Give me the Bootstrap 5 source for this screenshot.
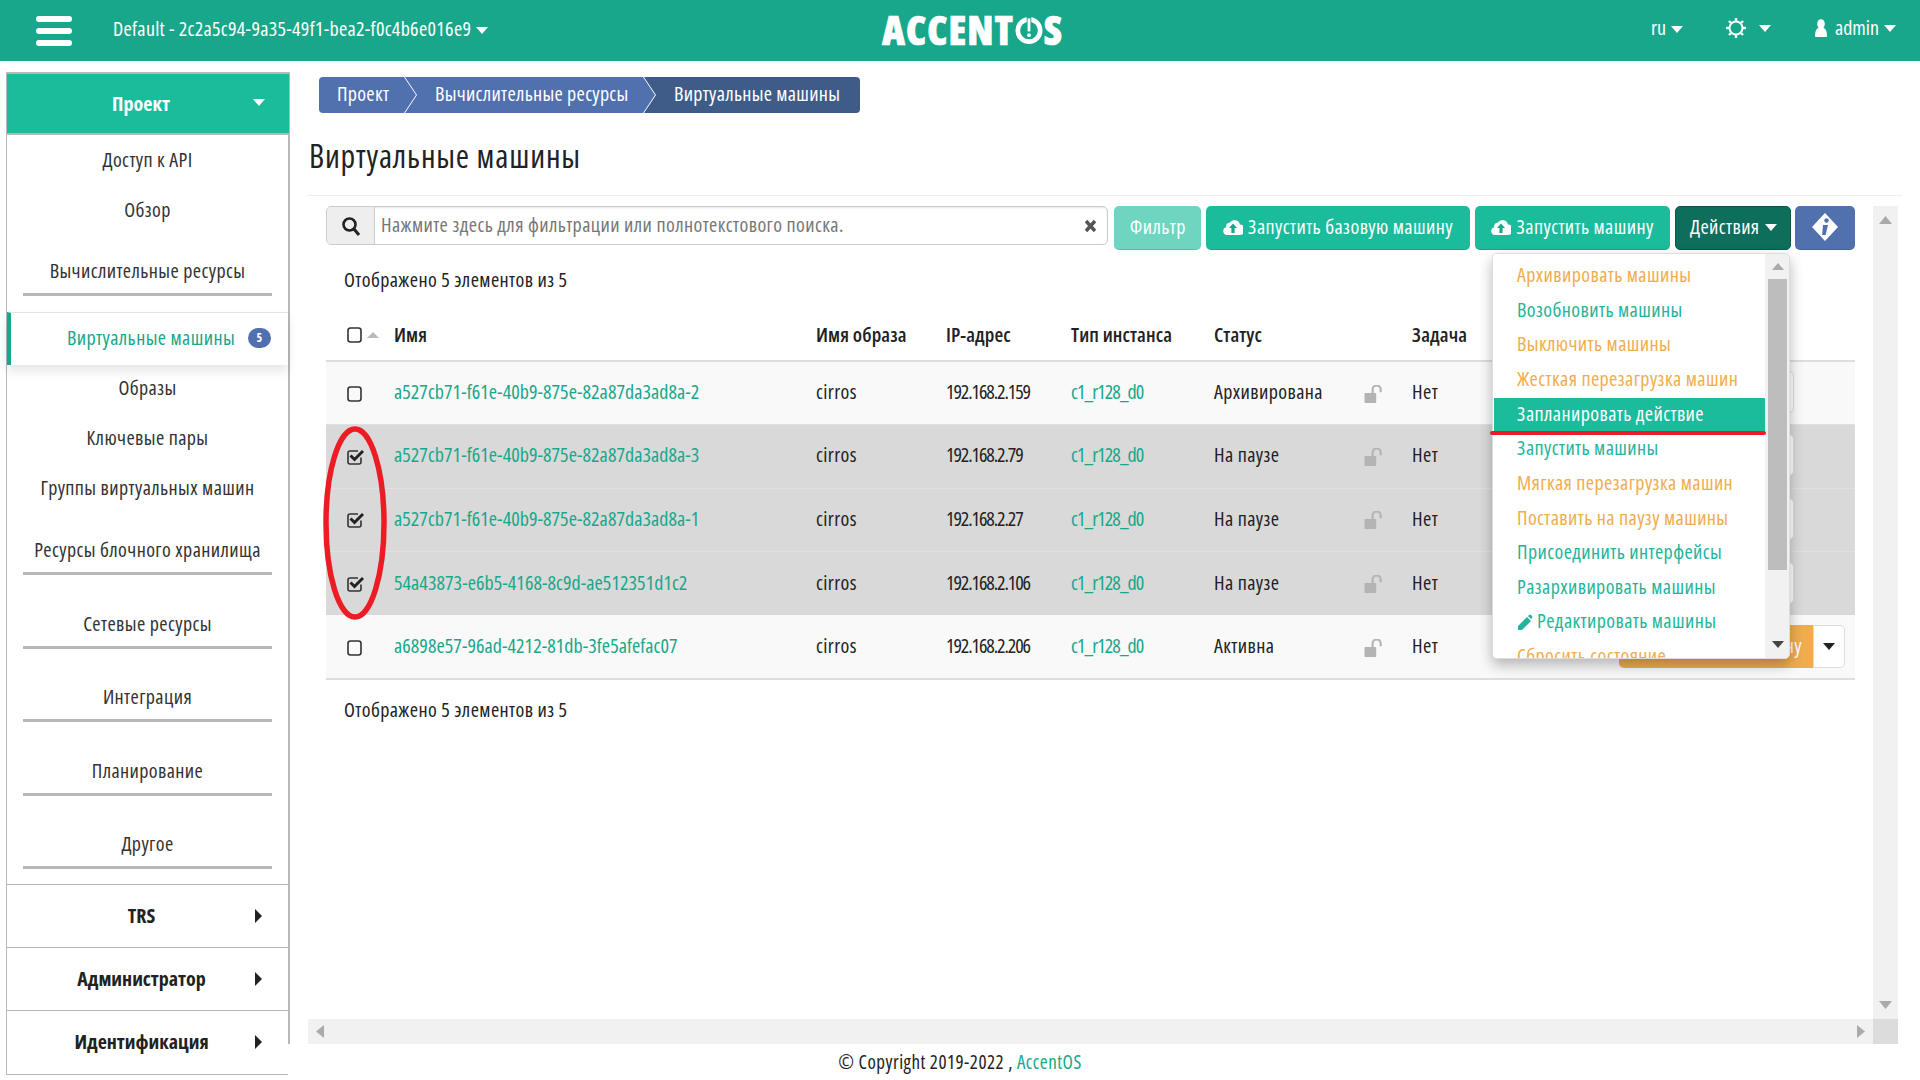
<!DOCTYPE html>
<html lang="ru">
<head>
<meta charset="utf-8">
<title>Виртуальные машины</title>
<link href="https://cdn.jsdelivr.net/npm/bootstrap@5.3.0/dist/css/bootstrap.min.css" rel="stylesheet">
<style>
:root{--ac-green:#18a78a;--ac-teal:#1abc9c;--ac-blue:#5070ae;--ac-line:#b8b8b8;}
html,body{height:100%;}
body{font-family:"Open Sans","Liberation Sans",sans-serif;font-stretch:condensed;font-size:20px;letter-spacing:.4px;color:#222;background:#fff;overflow:hidden;width:1920px;height:1080px;display:flex;flex-direction:column;white-space:nowrap;}
a{color:var(--ac-green);text-decoration:none;}
.ip-t{letter-spacing:-1.1px;}
.ty-t{letter-spacing:-.95px;}
.id-t{letter-spacing:.05px;}
.top-bar{height:61px;background:var(--ac-green);color:#fff;flex:none;padding:0;}
.burger{width:36px;margin-left:36px;display:flex;flex-direction:column;gap:6px;}
.burger span{display:block;height:6px;background:#fff;border-radius:3px;}
.proj{margin-left:41px;font-size:20px;width:380px;letter-spacing:.3px;margin-top:-4px;}
.tri-d{display:inline-block;width:0;height:0;border-left:6px solid transparent;border-right:6px solid transparent;border-top:7px solid currentColor;vertical-align:2px;margin-left:5px;}
.tri-r{display:inline-block;width:0;height:0;border-top:7px solid transparent;border-bottom:7px solid transparent;border-left:7px solid #222;}
.logo-wrap{position:absolute;left:882px;top:13px;height:34px;display:flex;align-items:center;font-weight:800;font-size:40px;line-height:1;letter-spacing:1px;color:#fff;-webkit-text-stroke:.7px #fff;}
.logo-wrap svg{width:28px;height:29px;margin:0 1px;}
.tr-lang{position:absolute;left:1651px;top:13px;letter-spacing:0;}
.tr-gear{position:absolute;left:1726px;top:18px;display:flex;align-items:center}
.gear-gap{margin-left:13px;}
.tr-user{position:absolute;left:1815px;top:13px;display:flex;align-items:center;letter-spacing:0;}
.layout{flex:1 1 auto;display:flex;min-height:0;}
.side{width:284px;margin:11px 0 0 6px;flex:none;border-left:1px solid var(--ac-line);border-right:2px solid var(--ac-line);height:1003px;border-bottom:1px solid var(--ac-line);}
.side-head{height:63px;background:var(--ac-teal);color:#fff;font-weight:700;font-size:20px;letter-spacing:0;border-top:2px solid var(--ac-line);border-bottom:2px solid var(--ac-line);margin-right:-1px;position:relative;display:flex;align-items:center;justify-content:center;padding-right:14px;}
.side-head .tri-d{position:absolute;right:24px;top:25px;}
.side-i{display:flex;align-items:center;justify-content:center;color:#333;font-size:20px;}
.hi-50{height:50px;}
.hi-49{height:49px;}
.up-2{padding-bottom:3px;}
.side-g{display:flex;align-items:flex-end;justify-content:center;margin:0 16px;border-bottom:3px solid var(--ac-line);padding-bottom:10px;color:#333;font-size:20px;line-height:25px;}
.g-60{height:61px;}
.g-73{height:73.6px;}
.side-act{height:53px;margin-top:16px;color:var(--ac-green);border-top:1px solid #e4e4e4;border-left:4px solid var(--ac-green);box-shadow:0 6px 10px rgba(0,0,0,.1);display:flex;align-items:center;padding:0 0 2px 56px;gap:13px;font-size:20px;background:#fff;position:relative;}
.side-act .badge{background:var(--ac-blue);border-radius:12px;width:23px;height:20px;padding:0;font-size:12px;line-height:20px;}
.side-foot{height:63px;border-top:1px solid var(--ac-line);display:flex;align-items:center;justify-content:center;position:relative;font-weight:700;font-size:20px;letter-spacing:0;color:#222;padding-right:12px;}
.side-foot .tri-r{position:absolute;right:26px;top:24px;}
.mt-16px{margin-top:15px;}
.work{flex:1 1 auto;min-width:0;display:flex;flex-direction:column;position:relative;}
.crumbs{margin:16px 0 0 29px;display:flex;height:36px;width:541px;border-radius:4px;overflow:hidden;list-style:none;padding:0;flex:none;}
.crumbs li{background:var(--ac-blue);color:#fff;display:flex;align-items:center;font-size:20px;letter-spacing:.3px;padding-bottom:2px;}
.crumbs li.c1{width:97px;padding-left:18px;clip-path:polygon(0 0,calc(100% - 12px) 0,100% 50%,calc(100% - 12px) 100%,0 100%);}
.crumbs li.c2{width:250px;margin-left:-11px;padding-left:30px;clip-path:polygon(0 0,calc(100% - 12px) 0,100% 50%,calc(100% - 12px) 100%,0 100%,12px 50%);}
.crumbs li.c3{flex:1;margin-left:-11px;padding-left:30px;background:#3f5b88;clip-path:polygon(0 0,100% 0,100% 100%,0 100%,12px 50%);}
.page-t{margin:25px 0 0 19px;font-size:32px;line-height:36px;font-weight:400;color:#222;letter-spacing:.8px;}
.rule{margin:21px 18px 0 18px;border-top:1px solid #eee;height:0;flex:none;}
.pane{display:flex;margin:10px 22px 0 18px;height:813px;flex:none;}
.pane-in{flex:1 1 auto;min-width:0;padding-left:18px;padding-right:18px;position:relative;}
.vbar{width:25px;background:#f1f1f1;flex:none;display:flex;flex-direction:column;justify-content:space-between;align-items:center;padding:10px 0 10px;}
.hbar{margin:0 22px 0 18px;height:25px;background:#f1f1f1;display:flex;justify-content:space-between;align-items:center;flex:none;padding:0 33px 0 8px;position:relative;}
.hbar i{position:absolute;right:0;top:0;width:25px;height:25px;background:#dcdcdc;}
.tools{display:flex;gap:5px;height:44px;}
.srch{width:784px;height:39px;display:flex;border:1px solid #ccc;border-radius:5px;overflow:hidden;box-shadow:inset 0 1px 2px rgba(0,0,0,.1);margin-right:1px;}
.srch-ic{width:48px;background:#eee;border-right:1px solid #ccc;display:flex;align-items:center;justify-content:center;}
.srch-tx{flex:1;color:#777;padding:0 0 2px 6px;display:flex;align-items:center;font-size:20px;}
.srch-x{width:34px;display:flex;align-items:center;justify-content:center;}
.btn-ac{height:44px;border-radius:5px;color:#fff;border:0;border-bottom:1px solid rgba(0,0,0,.12);font-size:20px;letter-spacing:.4px;display:flex;align-items:center;justify-content:center;gap:5px;padding:0 0 2px;font-stretch:condensed;}
.b-flt{width:87px;background:#6dd5c0;}
.b-run1{width:264px;background:var(--ac-teal);}
.b-run2{width:196px;background:var(--ac-teal);}
.b-act{width:116px;background:#0e6e5c;border:1px solid #0a5648;}
.b-inf{width:60px;background:var(--ac-blue);margin-left:-1px;}
.cnt{margin:17px 0 0 18px;line-height:26px;}
.cnt-b{margin:17px 0 0 18px;line-height:26px;}
.vm-t{table-layout:fixed;width:1529px;margin:0;margin-top:16px;--bs-table-bg:transparent;}
.vm-t th{font-weight:600;letter-spacing:.1px;border-bottom:2px solid #ddd;height:52px;padding:0 0 0 13px;vertical-align:middle;font-size:20px;color:#222;}
.vm-t td{height:63.5px;padding:0 0 2px 13px;vertical-align:middle;font-size:20px;border-bottom:0;background:#f9f9f9;color:#222;box-shadow:none;}
.vm-t tr.pick td{background:#d9d9d9;border-top:1px solid #e0e0e0;}
.vm-t tr:last-child td{border-bottom:2px solid #ddd;padding-bottom:0;}
.c-a{width:55px}.c-b{width:422px}.c-c{width:130px}.c-d{width:125px}.c-e{width:143px}.c-f{width:150px}.c-g{width:48px}.c-h{width:120px}
.vm-t th.cb,.vm-t td.cb{padding:0 0 2px 20px;}
.sort-up{display:inline-block;border-left:6px solid transparent;border-right:6px solid transparent;border-bottom:6px solid #bbb;vertical-align:3px;margin-left:3px;}
.row-btn{display:block;margin-left:auto;margin-right:61px;height:42px;width:180px;background:#fff;border:1px solid #ddd;border-radius:5px;}
.row-grp{display:flex;height:43px;width:226px;margin-left:auto;margin-right:10px;}
.row-grp b{flex:1;background:#f0ad4e;border-radius:5px 0 0 5px;color:#fff;font-weight:400;text-align:right;padding-right:11px;line-height:41px;font-size:20px;}
.row-grp span{width:32px;background:#fff;border:1px solid #ddd;border-radius:0 5px 5px 0;display:flex;align-items:center;justify-content:center;color:#222;}
.row-grp .tri-d{margin:0;}
.menu-pop{position:absolute;left:1184px;top:47px;width:298px;height:406px;margin:0;padding:0;background:#fff;border:1px solid #ddd;border-radius:5px;box-shadow:0 6px 14px rgba(0,0,0,.28);overflow:hidden;display:flex;z-index:5;}
.menu-list{width:272px;list-style:none;margin:0;padding:4px 0 0;background:#fff;flex:none;}
.menu-list li{height:34.6px;line-height:34px;padding-left:24px;font-size:20px;white-space:nowrap;}
.m-o{color:#f0ad4e}.m-t{color:#25b49a}
.menu-list li.m-on{background:var(--ac-teal);color:#fff;margin-left:1px;padding-left:23px;height:33px;margin-top:2px;line-height:32px;}
.menu-sb{flex:1;background:#f1f1f1;position:relative;}
.menu-sb i{position:absolute;left:3px;right:2px;top:25px;height:291px;background:#bdbdbd;}
.menu-sb svg{position:absolute;left:7px;}
.a-up{top:9px}.a-dn{bottom:9px}
.red-u{position:absolute;left:1182px;top:225px;width:276px;height:4px;background:#ed1c24;border-radius:2px;z-index:6;}
.red-o{position:absolute;left:15px;top:220px;width:64px;height:194px;z-index:6;}
.foot-l{margin-left:-2px;height:36px;background:#fff;position:relative;text-align:center;padding-right:288px;line-height:36px;font-size:19px;letter-spacing:.5px;flex:none;}
</style>
</head>
<body>
<svg width="0" height="0" class="d-none">
<defs>
<symbol id="ic-cloud" viewBox="0 0 20 18"><path fill="#fff" d="M4 17a4 4 0 0 1-1-7.800 4.500 4.500 0 0 1 4-4.600A5.500 5.500 0 0 1 17 6.500a5 5 0 0 1-.5 10.500z"/><path fill="#18a78a" d="M10 5.500l4 4.500h-2.400v5H8.400v-5H6z"/></symbol>
<symbol id="ic-lock" viewBox="0 0 20 20"><rect x="0" y="9" width="13" height="11" rx="1" fill="#b4b4b4"/><path d="M9 9V5a4.500 4.500 0 0 1 9 0v3" fill="none" stroke="#b4b4b4" stroke-width="2.400"/></symbol>
<symbol id="ic-box" viewBox="0 0 18 18"><rect x="2" y="2" width="13" height="14" rx="2.500" fill="none" stroke="#333" stroke-width="1.600"/></symbol>
<symbol id="ic-chk" viewBox="0 0 18 18"><path d="M15 9.500V14a2 2 0 0 1-2 2H4a2 2 0 0 1-2-2V5a2 2 0 0 1 2-2h8" fill="none" stroke="#333" stroke-width="1.600"/><path d="M4.500 7.500l4 4L17 3" fill="none" stroke="#222" stroke-width="3"/></symbol>
</defs>
</svg>

<header class="navbar top-bar position-relative flex-nowrap justify-content-start">
  <div class="burger"><span></span><span></span><span></span></div>
  <div class="proj text-nowrap"><span>Default - 2c2a5c94-9a35-49f1-bea2-f0c4b6e016e9</span><span class="tri-d"></span></div>
  <div class="logo-wrap">ACCENT<svg viewBox="0 0 30 30"><circle cx="15" cy="15" r="12" fill="none" stroke="#fff" stroke-width="5"/><rect x="12.500" y="0" width="5" height="15" fill="#18a78a"/><rect x="13.500" y="2" width="3" height="14" fill="#fff"/><circle cx="15" cy="20" r="2" fill="#fff"/></svg>S</div>
  <div class="tr-lang">ru<span class="tri-d"></span></div>
  <div class="tr-gear"><svg width="20" height="20" viewBox="0 0 20 20"><circle cx="10" cy="10" r="6.500" fill="none" stroke="#fff" stroke-width="2"/><path stroke="#fff" stroke-width="2.400" d="M10 0v3M10 17v3M0 10h3M17 10h3M3 3l2 2M15 15l2 2M17 3l-2 2M5 15l-2 2"/></svg><span class="tri-d gear-gap"></span></div>
  <div class="tr-user"><svg width="12" height="18" viewBox="0 0 12 18" class="me-2"><ellipse cx="6" cy="5" rx="3.800" ry="4.800" fill="#fff"/><path fill="#fff" d="M0 17c0-5 1.500-7.500 3.500-8h5c2 .5 3.500 3 3.500 8 0 .6-.5 1-1 1H1c-.5 0-1-.4-1-1z"/></svg>admin<span class="tri-d"></span></div>
</header>

<div class="layout">
  <aside class="side">
    <div class="side-head">Проект<span class="tri-d"></span></div>
    <div class="side-i hi-50">Доступ к API</div>
    <div class="side-i hi-50">Обзор</div>
    <div class="side-g g-60">Вычислительные ресурсы</div>
    <div class="side-act"><span>Виртуальные машины</span><span class="badge rounded-pill">5</span></div>
    <div class="side-i hi-49 up-2">Образы</div>
    <div class="side-i hi-50 up-2">Ключевые пары</div>
    <div class="side-i hi-50 up-2">Группы виртуальных машин</div>
    <div class="side-g g-60">Ресурсы блочного хранилища</div>
    <div class="side-g g-73">Сетевые ресурсы</div>
    <div class="side-g g-73">Интеграция</div>
    <div class="side-g g-73">Планирование</div>
    <div class="side-g g-73">Другое</div>
    <div class="side-foot mt-16px">TRS<span class="tri-r"></span></div>
    <div class="side-foot">Администратор<span class="tri-r"></span></div>
    <div class="side-foot">Идентификация<span class="tri-r"></span></div>
  </aside>

  <main class="work">
    <ol class="crumbs">
      <li class="c1">Проект</li>
      <li class="c2">Вычислительные ресурсы</li>
      <li class="c3">Виртуальные машины</li>
    </ol>
    <h1 class="page-t">Виртуальные машины</h1>
    <div class="rule"></div>
    <div class="pane">
      <div class="pane-in">
        <div class="tools">
          <div class="srch">
            <span class="srch-ic"><svg width="20" height="20" viewBox="0 0 20 20"><circle cx="8.500" cy="8.500" r="6" fill="none" stroke="#222" stroke-width="2.600"/><path d="M13 13l5 6" stroke="#222" stroke-width="3"/></svg></span>
            <span class="srch-tx">Нажмите здесь для фильтрации или полнотекстового поиска.</span>
            <span class="srch-x"><svg width="13" height="14" viewBox="0 0 13 14"><path d="M2 2l9 10M11 2L2 12" stroke="#555" stroke-width="3.400"/></svg></span>
          </div>
          <button class="btn btn-ac b-flt">Фильтр</button>
          <button class="btn btn-ac b-run1"><svg width="20" height="18"><use href="#ic-cloud"/></svg>Запустить базовую машину</button>
          <button class="btn btn-ac b-run2"><svg width="20" height="18"><use href="#ic-cloud"/></svg>Запустить машину</button>
          <button class="btn btn-ac b-act">Действия<span class="tri-d ms-0"></span></button>
          <button class="btn btn-ac b-inf"><svg width="28" height="30" viewBox="0 0 28 30"><path d="M14 1l13 14-13 14L1 15z" fill="#fff"/><circle cx="15.500" cy="8.500" r="2.200" fill="#5070ae"/><path d="M12 13h5l-2.400 10h-3.400z" fill="#5070ae"/></svg></button>
        </div>
        <div class="cnt">Отображено 5 элементов из 5</div>
        <table class="table vm-t">
          <colgroup><col class="c-a"><col class="c-b"><col class="c-c"><col class="c-d"><col class="c-e"><col class="c-f"><col class="c-g"><col class="c-h"><col></colgroup>
          <thead><tr>
            <th class="cb text-nowrap"><svg width="18" height="18" class="align-middle"><use href="#ic-box"/></svg><span class="sort-up"></span></th>
            <th>Имя</th><th>Имя образа</th><th>IP-адрес</th><th>Тип инстанса</th><th>Статус</th><th></th><th>Задача</th><th></th>
          </tr></thead>
          <tbody>
            <tr><td class="cb"><svg width="18" height="18"><use href="#ic-box"/></svg></td><td class="id-t"><a href="#">a527cb71-f61e-40b9-875e-82a87da3ad8a-2</a></td><td>cirros</td><td class="ip-t">192.168.2.159</td><td class="ty-t"><a href="#">c1_r128_d0</a></td><td>Архивирована</td><td><svg width="19" height="18"><use href="#ic-lock"/></svg></td><td>Нет</td><td><span class="row-btn"></span></td></tr>
            <tr class="pick"><td class="cb"><svg width="18" height="18"><use href="#ic-chk"/></svg></td><td class="id-t"><a href="#">a527cb71-f61e-40b9-875e-82a87da3ad8a-3</a></td><td>cirros</td><td class="ip-t">192.168.2.79</td><td class="ty-t"><a href="#">c1_r128_d0</a></td><td>На паузе</td><td><svg width="19" height="18"><use href="#ic-lock"/></svg></td><td>Нет</td><td><span class="row-btn"></span></td></tr>
            <tr class="pick"><td class="cb"><svg width="18" height="18"><use href="#ic-chk"/></svg></td><td class="id-t"><a href="#">a527cb71-f61e-40b9-875e-82a87da3ad8a-1</a></td><td>cirros</td><td class="ip-t">192.168.2.27</td><td class="ty-t"><a href="#">c1_r128_d0</a></td><td>На паузе</td><td><svg width="19" height="18"><use href="#ic-lock"/></svg></td><td>Нет</td><td><span class="row-btn"></span></td></tr>
            <tr class="pick"><td class="cb"><svg width="18" height="18"><use href="#ic-chk"/></svg></td><td class="id-t"><a href="#">54a43873-e6b5-4168-8c9d-ae512351d1c2</a></td><td>cirros</td><td class="ip-t">192.168.2.106</td><td class="ty-t"><a href="#">c1_r128_d0</a></td><td>На паузе</td><td><svg width="19" height="18"><use href="#ic-lock"/></svg></td><td>Нет</td><td><span class="row-btn"></span></td></tr>
            <tr><td class="cb"><svg width="18" height="18"><use href="#ic-box"/></svg></td><td class="id-t"><a href="#">a6898e57-96ad-4212-81db-3fe5afefac07</a></td><td>cirros</td><td class="ip-t">192.168.2.206</td><td class="ty-t"><a href="#">c1_r128_d0</a></td><td>Активна</td><td><svg width="19" height="18"><use href="#ic-lock"/></svg></td><td>Нет</td><td><div class="row-grp"><b>Архивировать машину</b><span><i class="tri-d"></i></span></div></td></tr>
          </tbody>
        </table>
        <div class="cnt-b">Отображено 5 элементов из 5</div>

        <div class="menu-pop">
          <ul class="menu-list">
            <li class="m-o">Архивировать машины</li>
            <li class="m-t">Возобновить машины</li>
            <li class="m-o">Выключить машины</li>
            <li class="m-o">Жесткая перезагрузка машин</li>
            <li class="m-on">Запланировать действие</li>
            <li class="m-t">Запустить машины</li>
            <li class="m-o">Мягкая перезагрузка машин</li>
            <li class="m-o">Поставить на паузу машины</li>
            <li class="m-t">Присоединить интерфейсы</li>
            <li class="m-t">Разархивировать машины</li>
            <li class="m-t"><svg width="16" height="17" viewBox="0 0 16 17" class="me-1"><path fill="#25b49a" d="M1 12l9-9 4 4-9 9H1zM11 2l1-1a1.500 1.500 0 0 1 2 0l1 1a1.500 1.500 0 0 1 0 2l-1 1z"/></svg>Редактировать машины</li>
            <li class="m-o">Сбросить состояние</li>
          </ul>
          <div class="menu-sb"><svg class="a-up" width="12" height="8"><path d="M6 0l6 7H0z" fill="#aaa"/></svg><i></i><svg class="a-dn" width="12" height="8"><path d="M6 7L0 0h12z" fill="#444"/></svg></div>
        </div>
        <div class="red-u"></div>
        <svg class="red-o" viewBox="0 0 64 194"><ellipse cx="32" cy="97" rx="29" ry="94" fill="none" stroke="#ed1c24" stroke-width="5.500"/></svg>
      </div>
      <div class="vbar"><svg width="13" height="8"><path d="M6.500 0l6.500 8H0z" fill="#aaa"/></svg><svg width="13" height="8"><path d="M6.500 8L0 0h13z" fill="#aaa"/></svg></div>
    </div>
    <div class="hbar"><svg width="8" height="13"><path d="M0 6.500L8 0v13z" fill="#aaa"/></svg><svg width="8" height="13"><path d="M8 6.500L0 0v13z" fill="#aaa"/></svg><i></i></div>
    <footer class="foot-l">© Copyright 2019-2022 , <a href="#">AccentOS</a></footer>
  </main>
</div>
<script src="https://cdn.jsdelivr.net/npm/bootstrap@5.3.0/dist/js/bootstrap.bundle.min.js"></script>
</body>
</html>
